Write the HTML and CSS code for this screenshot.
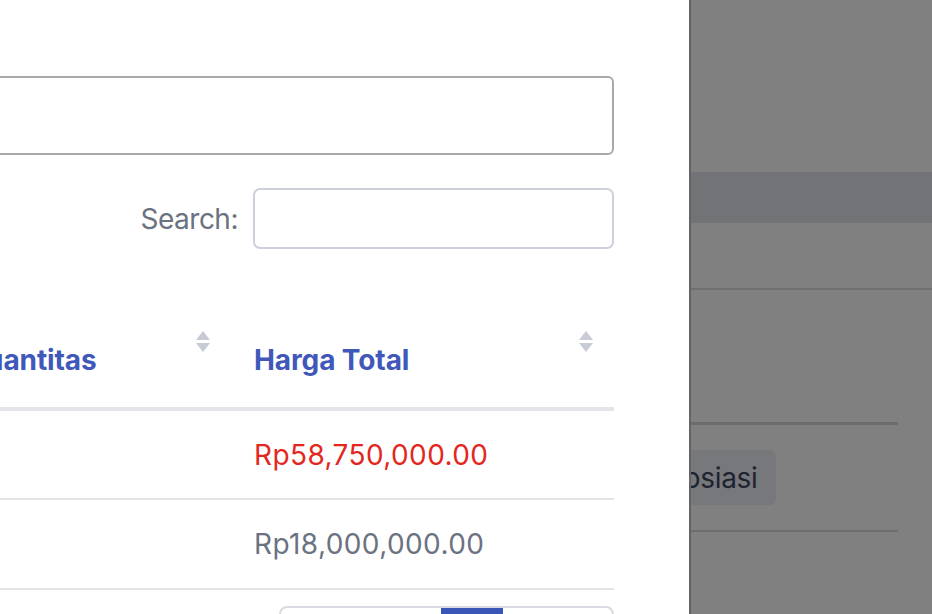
FILE: index.html
```html
<!DOCTYPE html>
<html lang="id">
<head>
<meta charset="utf-8">
<title>Detail Pesanan</title>
<link rel="stylesheet" href="styles.css">
</head>
<body>
<div class="page">
  <aside class="drawer">
    <div class="drawer-content">
      <div class="note-box"></div>
      <div class="search-row">
        <label class="search-label" for="q">Search:</label>
        <input id="q" class="search-input" type="search">
      </div>
      <table class="data-table">
        <colgroup>
          <col class="col-a">
          <col class="col-b">
          <col class="col-c">
        </colgroup>
        <thead>
          <tr>
            <th><div class="th-inner"><span>Harga Satuan</span><svg class="sort" viewBox="0 0 14 22"><path d="M7 0 L14 9 H0 Z"/><path d="M0 12 H14 L7 21 Z"/></svg></div></th>
            <th><div class="th-inner"><span>Kuantitas</span><svg class="sort" viewBox="0 0 14 22"><path d="M7 0 L14 9 H0 Z"/><path d="M0 12 H14 L7 21 Z"/></svg></div></th>
            <th><div class="th-inner"><span>Harga Total</span><svg class="sort" viewBox="0 0 14 22"><path d="M7 0 L14 9 H0 Z"/><path d="M0 12 H14 L7 21 Z"/></svg></div></th>
          </tr>
        </thead>
        <tbody>
          <tr>
            <td>Rp11,750,000.00</td>
            <td>5</td>
            <td class="price-red">Rp58,750,000.00</td>
          </tr>
          <tr>
            <td>Rp9,000,000.00</td>
            <td>2</td>
            <td>Rp18,000,000.00</td>
          </tr>
        </tbody>
      </table>
      <nav class="pager">
        <span class="pg">Previous</span>
        <span class="pg active">1</span>
        <span class="pg">Next</span>
      </nav>
    </div>
  </aside>
  <div class="backdrop">
    <div class="bd-band"></div>
    <div class="bd-rule"></div>
    <div class="bd-section">
      <div class="bd-thick"></div>
      <div class="bd-actions">
        <button class="bd-btn" type="button">Negosiasi</button>
      </div>
      <div class="bd-line"></div>
    </div>
  </div>
</div>
</body>
</html>
```
FILE: styles.css
```css
* { box-sizing: border-box; }
html, body { margin: 0; padding: 0; }
body {
  width: 932px;
  height: 614px;
  overflow: hidden;
  font-family: Inter, "Noto Sans", "DejaVu Sans", sans-serif;
  font-size: 28px;
  letter-spacing: 0.4px;
  color: #6b7280;
  background: #808080;
}
.page {
  display: flex;
  height: 614px;
}
.drawer {
  position: relative;
  z-index: 1;
  width: 691px;
  flex: none;
  background: #ffffff;
  border-right: 2px solid #646464;
  overflow: hidden;
}
.drawer-content {
  margin-left: -299px;
  width: 913px;
  padding-top: 76px;
}
.note-box {
  height: 79px;
  border: 2px solid #a9a9a9;
  border-radius: 6px;
}
.search-row {
  display: flex;
  justify-content: flex-end;
  align-items: center;
  gap: 15px;
  margin-top: 33px;
}
.search-label {
  color: #6b7280;
  letter-spacing: -0.5px;
}
.search-input {
  width: 361px;
  height: 61px;
  border: 2px solid #cdd1dc;
  border-radius: 7px;
  background: #fff;
  font: inherit;
  outline: none;
}
.data-table {
  width: 913px;
  margin-top: 63px;
  border-collapse: collapse;
  table-layout: fixed;
}
.col-a { width: 243px; }
.col-b { width: 287px; }
.col-c { width: 383px; }
.data-table th {
  padding: 18px 21px 26px 23px;
  border-bottom: 4px solid #e3e4ea;
  color: #3f58b9;
  font-weight: 700;
  text-align: left;
  line-height: 42px;
  letter-spacing: -0.1px;
  white-space: nowrap;
}
.th-inner {
  display: flex;
  justify-content: space-between;
  align-items: flex-start;
}
.th-inner span { padding-top: 9px; }
.sort {
  width: 14px;
  height: 22px;
  margin-top: 1px;
  fill: #c6cbd6;
  flex: none;
}
.data-table td {
  height: 90px;
  padding: 0 23px;
  border-bottom: 2px solid #e3e3e8;
  color: #6b7280;
  white-space: nowrap;
}
.data-table td.price-red { color: #e3271e; }
.pager {
  display: flex;
  width: 335px;
  margin: 16px 0 0 578px;
  height: 60px;
  border: 2px solid #d8dbe2;
  border-radius: 8px;
  overflow: hidden;
  font-size: 20px;
}
.pg {
  flex: 1;
  display: flex;
  align-items: center;
  justify-content: center;
  color: #6b7280;
}
.pg.active {
  flex: none;
  width: 62px;
  background: #3a56b7;
  color: #fff;
}
.pg:first-child { flex: none; width: 160px; }
.backdrop {
  flex: 1;
  background: #808080;
  display: flex;
  flex-direction: column;
  min-width: 0;
}
.bd-band {
  margin-top: 172px;
  height: 51px;
  background: #727377;
}
.bd-rule {
  margin-top: 65px;
  height: 2px;
  background: #6f6f6f;
}
.bd-section {
  margin-right: 34px;
  padding-top: 132px;
}
.bd-thick {
  height: 3px;
  background: #6c6c6f;
}
.bd-actions {
  display: flex;
  margin-top: 25px;
}
.bd-btn {
  margin-left: -79px;
  height: 55px;
  padding: 0 18px;
  border: none;
  border-radius: 7px;
  background: #77787b;
  color: #1d2330;
  font-family: Inter, "Noto Sans", sans-serif;
  font-size: 28px;
  letter-spacing: -0.3px;
}
.bd-line {
  margin-top: 25px;
  height: 2px;
  background: #6e6e72;
}
```
